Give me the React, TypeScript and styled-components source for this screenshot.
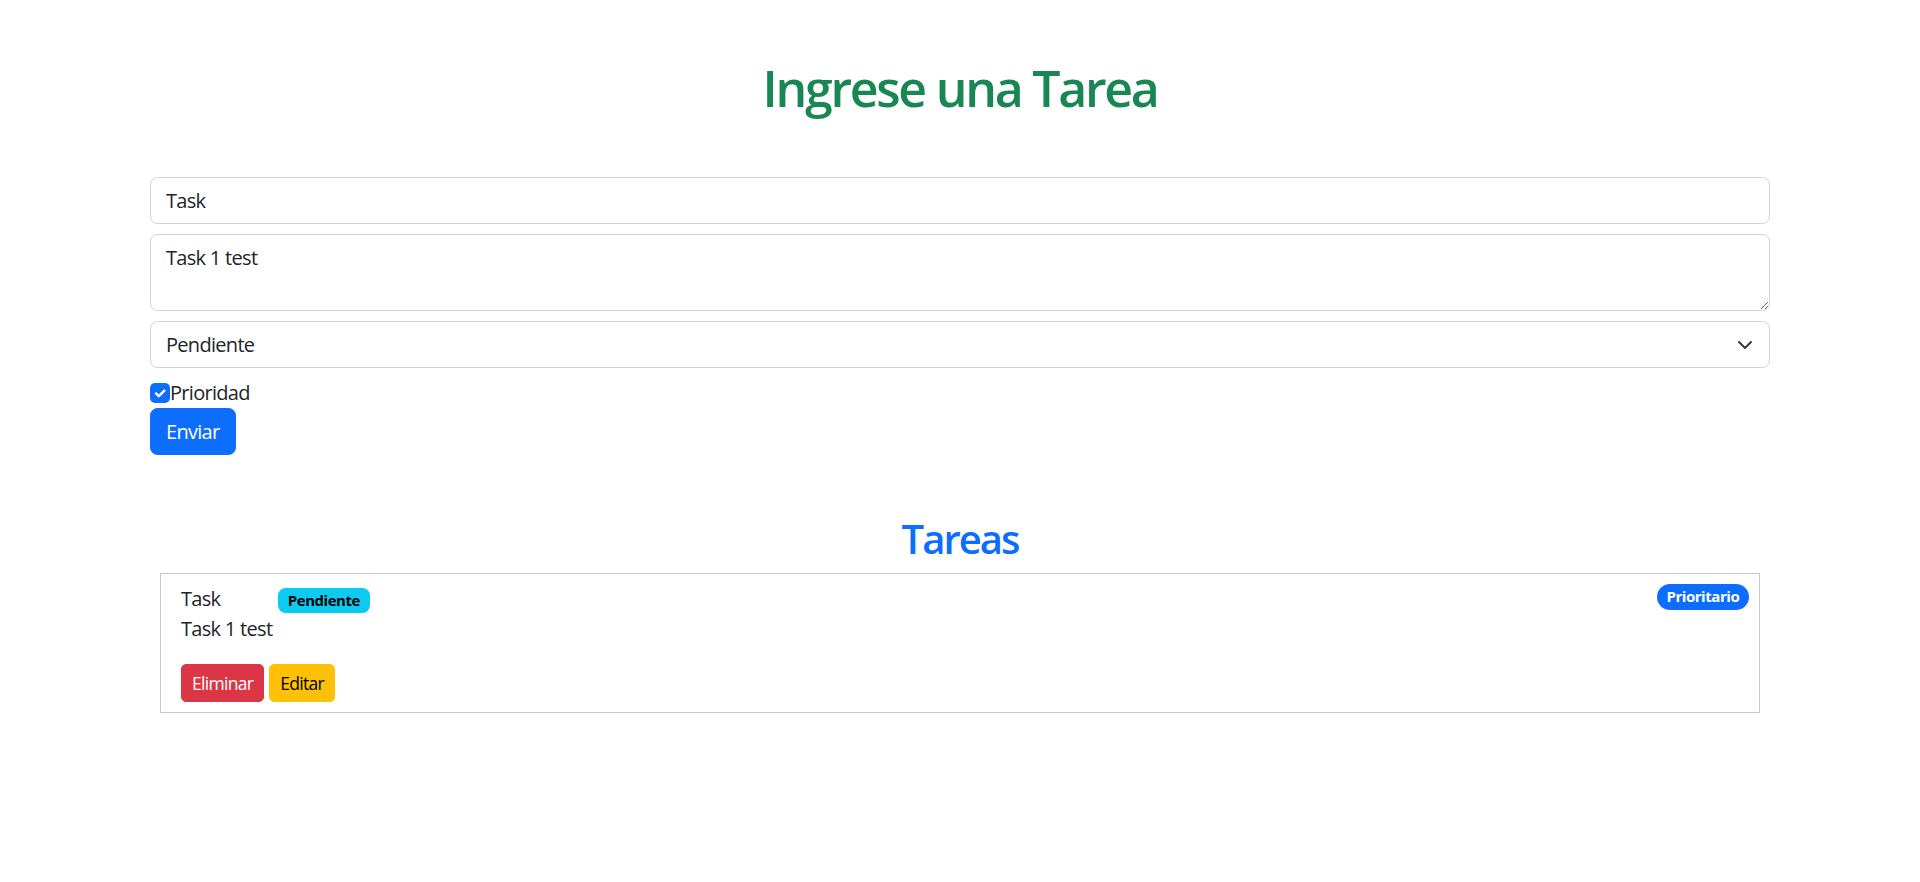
import * as React from "react";
import styled, { createGlobalStyle } from "styled-components";

const colors = {
    text: "#212529",
    primary: "#0d6efd",
    success: "#198754",
    danger: "#dc3545",
    warning: "#ffc107",
    info: "#0dcaf0",
    border: "#ced4da",
    cardBorder: "#c8c8c8",
};

const GlobalStyle = createGlobalStyle`
    html, body {
        margin: 0;
        background: #fff;
    }
    body {
        font-family: "Open Sans", "Noto Sans", "Liberation Sans", sans-serif;
        font-size: 20px;
        line-height: 1.5;
        letter-spacing: -0.035em;
        color: ${colors.text};
    }
    * {
        box-sizing: border-box;
    }
`;

const Container = styled.div`
    width: 1620px;
    margin: 0 auto;
`;

const Title = styled.h1`
    margin: 58px 0 59px;
    font-size: 50px;
    font-weight: 600;
    line-height: 1.2;
    letter-spacing: -0.045em;
    text-align: center;
    color: ${colors.success};
`;

const Form = styled.form`
    display: flex;
    flex-direction: column;
    align-items: flex-start;
`;

const fieldStyles = `
    display: block;
    width: 100%;
    margin: 0 0 10px;
    padding: 7.5px 15px;
    font: inherit;
    font-size: 20px;
    line-height: 1.5;
    letter-spacing: inherit;
    color: ${colors.text};
    background: #fff;
    border: 1px solid ${colors.border};
    border-radius: 7.5px;
    outline: none;
`;

const Input = styled.input`
    ${fieldStyles}
    height: 47px;
`;

const TextArea = styled.textarea`
    ${fieldStyles}
    height: 77px;
    resize: vertical;
`;

const SelectWrap = styled.div`
    position: relative;
    width: 100%;
    margin-bottom: 10px;
`;

const Select = styled.select`
    ${fieldStyles}
    margin: 0;
    height: 47px;
    appearance: none;
    padding-right: 50px;
`;

const Chevron = styled.svg`
    position: absolute;
    right: 17px;
    top: 50%;
    transform: translateY(-50%);
    pointer-events: none;
`;

const CheckLabel = styled.label`
    display: flex;
    align-items: flex-start;
    line-height: 30px;
`;

const CheckBox = styled.span`
    display: flex;
    align-items: center;
    justify-content: center;
    width: 20px;
    height: 20px;
    margin-top: 5px;
    border-radius: 5px;
    background: ${colors.primary};
`;

const Button = styled.button<{ $variant: "primary" | "danger" | "warning"; $small?: boolean }>`
    font: inherit;
    font-size: ${(p) => (p.$small ? "17.5px" : "20px")};
    line-height: 1.5;
    letter-spacing: inherit;
    padding: ${(p) => (p.$small ? "5px 10px" : "7.5px 15px")};
    border-radius: ${(p) => (p.$small ? "5px" : "7.5px")};
    border: 1px solid ${(p) => colors[p.$variant]};
    background: ${(p) => colors[p.$variant]};
    color: ${(p) => (p.$variant === "warning" ? "#000" : "#fff")};
    cursor: pointer;
`;

const ListSection = styled.section`
    margin-top: 60px;
`;

const SubTitle = styled.h2`
    margin: 0 0 10px;
    font-size: 40px;
    font-weight: 600;
    line-height: 1.2;
    letter-spacing: -0.05em;
    text-align: center;
    color: ${colors.primary};
`;

const TaskCard = styled.div`
    position: relative;
    margin: 0 10px;
    padding: 10px 20px;
    border: 1px solid ${colors.cardBorder};
`;

const TaskHead = styled.div`
    display: flex;
    align-items: baseline;
`;

const TaskName = styled.span`
    width: 97px;
`;

const Badge = styled.span<{ $bg: string; $fg: string; $pill?: boolean }>`
    display: inline-block;
    padding: 5.25px 9.75px;
    font-size: 15px;
    font-weight: 700;
    line-height: 1;
    letter-spacing: -0.03em;
    border-radius: ${(p) => (p.$pill ? "50rem" : "7.5px")};
    background: ${(p) => p.$bg};
    color: ${(p) => p.$fg};
`;

const CornerBadge = styled(Badge)`
    position: absolute;
    top: 10px;
    right: 10px;
`;

const TaskDesc = styled.p`
    margin: 0 0 20px;
`;

const Actions = styled.div`
    display: flex;
    gap: 5px;
`;

export default function App() {
    const [priority, setPriority] = React.useState(true);

    return (
        <>
            <GlobalStyle />
            <Container>
                <Title>Ingrese una Tarea</Title>
                <Form onSubmit={(e) => e.preventDefault()}>
                    <Input type="text" defaultValue="Task" />
                    <TextArea rows={2} defaultValue="Task 1 test" />
                    <SelectWrap>
                        <Select defaultValue="Pendiente">
                            <option>Pendiente</option>
                            <option>Completada</option>
                        </Select>
                        <Chevron width="16" height="12" viewBox="0 0 16 12">
                            <path d="M2 3l6 6 6-6" fill="none" stroke="#343a40" strokeWidth="2" strokeLinecap="round" strokeLinejoin="round" />
                        </Chevron>
                    </SelectWrap>
                    <CheckLabel onClick={() => setPriority(!priority)}>
                        <CheckBox>
                            {priority && (
                                <svg width="16" height="16" viewBox="0 0 20 20">
                                    <path d="M5 10.5l3.5 3.5 7-7" fill="none" stroke="#fff" strokeWidth="3" strokeLinecap="round" strokeLinejoin="round" />
                                </svg>
                            )}
                        </CheckBox>
                        Prioridad
                    </CheckLabel>
                    <Button type="submit" $variant="primary">Enviar</Button>
                </Form>

                <ListSection>
                    <SubTitle>Tareas</SubTitle>
                    <TaskCard>
                        <TaskHead>
                            <TaskName>Task</TaskName>
                            <Badge $bg={colors.info} $fg="#000">Pendiente</Badge>
                        </TaskHead>
                        <CornerBadge $bg={colors.primary} $fg="#fff" $pill>Prioritario</CornerBadge>
                        <TaskDesc>Task 1 test</TaskDesc>
                        <Actions>
                            <Button $variant="danger" $small>Eliminar</Button>
                            <Button $variant="warning" $small>Editar</Button>
                        </Actions>
                    </TaskCard>
                </ListSection>
            </Container>
        </>
    );
}
